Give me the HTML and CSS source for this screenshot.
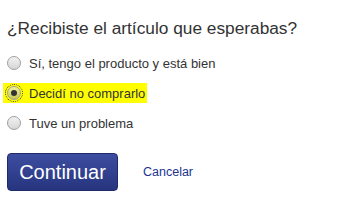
FILE: index.html
```html
<!DOCTYPE html>
<html>
<head>
    <title>Encuesta de compra</title>
    <link rel="stylesheet" href="styles.css">
</head>
<body>
    <div class="survey">
        <h2>¿Recibiste el artículo que esperabas?</h2>
        <div class="options">
            <label class="option"><input type="radio" name="answer"><span>Sí, tengo el producto y está bien</span></label>
            <label class="option selected"><input type="radio" name="answer" checked><span>Decidí no comprarlo</span></label>
            <label class="option"><input type="radio" name="answer"><span>Tuve un problema</span></label>
        </div>
        <div class="actions">
            <button class="continue">Continuar</button>
            <a href="#" class="cancel">Cancelar</a>
        </div>
    </div>
</body>
</html>
```

FILE: styles.css
```css
body {
    margin: 0;
    background: white;
    font-family: Arial, "Liberation Sans", sans-serif;
    color: #333;
}
.survey {
    padding: 18px 7px 0 7px;
}
h2 {
    font-size: 17.3px;
    font-weight: normal;
    color: #333;
    margin: 0 0 14px 0;
}
.options {
    display: flex;
    flex-direction: column;
    gap: 10px;
}
.option {
    display: flex;
    align-items: center;
    gap: 8px;
    font-size: 13px;
    height: 20px;
    width: max-content;
    padding: 0 2px 0 4px;
    margin-left: -4px;
}
.option.selected {
    background: #ffff00;
}
.option input {
    appearance: none;
    -webkit-appearance: none;
    margin: 0;
    width: 14px;
    height: 14px;
    border-radius: 50%;
    border: 1px solid #a0a0a0;
    background: linear-gradient(#f2f2f2, #d6d6d6);
    box-sizing: border-box;
    position: relative;
}
.option input:checked::after {
    content: "";
    position: absolute;
    left: 3px;
    top: 3px;
    width: 6px;
    height: 6px;
    border-radius: 50%;
    background: #333;
}
.option.selected input {
    outline: 1px dotted #333;
    outline-offset: 1px;
    background: linear-gradient(#f0f0a0, #c8c850);
}
.actions {
    display: flex;
    align-items: center;
    gap: 25px;
    margin-top: 20px;
}
.continue {
    background: linear-gradient(#3d4da0, #27357f);
    color: white;
    border: 1px solid #1f2a6a;
    border-radius: 4px;
    font-family: Arial, "Liberation Sans", sans-serif;
    font-size: 20px;
    width: 111px;
    height: 38px;
    padding: 0;
}
.cancel {
    color: #23358f;
    text-decoration: none;
    font-size: 12.5px;
}
```
